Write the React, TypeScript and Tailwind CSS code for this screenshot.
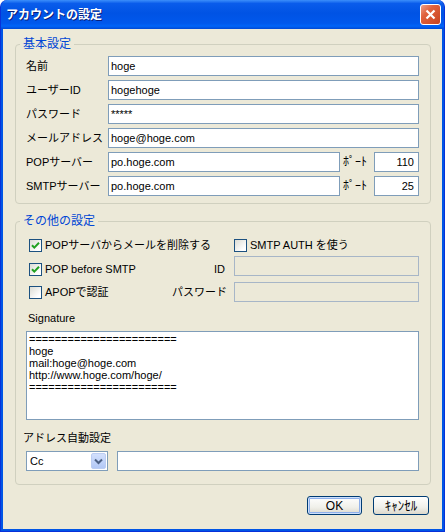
import { ReactNode } from 'react';

const FONT = "font-['Liberation_Sans','Noto_Sans_CJK_JP',sans-serif]";

interface FieldProps {
  value?: string;
  className?: string;
  align?: 'left' | 'right';
  disabled?: boolean;
}

const Field = ({ value = '', className = '', align = 'left', disabled = false }: FieldProps) => (
  <div
    className={`h-[20px] border px-[2px] text-[11px] leading-[18px] whitespace-nowrap overflow-hidden ${
      disabled ? 'bg-[#ECE9D8] border-[#A7B6C7]' : 'bg-white border-[#7F9DB9]'
    } ${align === 'right' ? 'text-right pr-[4px]' : ''} ${className}`}
  >
    {value}
  </div>
);

interface CheckProps {
  checked?: boolean;
  label: string;
}

const Check = ({ checked = false, label }: CheckProps) => (
  <div className="flex items-center gap-[3px]">
    <span className="w-[13px] h-[13px] shrink-0 border border-[#1C5180] bg-[linear-gradient(135deg,#DCDCD4,#FFFFFF_80%)] flex items-center justify-center">
      {checked && (
        <svg width="11" height="11" viewBox="0 0 11 11">
          <path d="M2 5.2 L4.3 7.6 L9 2.8" fill="none" stroke="#21A121" strokeWidth="2" />
        </svg>
      )}
    </span>
    <span className="text-[11px] leading-[14px] whitespace-nowrap">{label}</span>
  </div>
);

interface GroupProps {
  title: string;
  className?: string;
  children: ReactNode;
}

const Group = ({ title, className = '', children }: GroupProps) => (
  <fieldset className={`min-w-0 border border-[#D0D0BF] rounded-[4px] pl-[10px] pr-[11px] ${className}`}>
    <legend className="-ml-[6px] px-[3px] text-[12px] leading-[14px] text-[#0046D5]">{title}</legend>
    {children}
  </fieldset>
);

interface ButtonProps {
  label: string;
  isDefault?: boolean;
  className?: string;
}

const Button = ({ label, isDefault = false, className = '' }: ButtonProps) => (
  <div
    className={`h-[19px] rounded-[3px] border border-[#003C74] bg-[linear-gradient(to_bottom,#FFFFFF,#F0F0EA_60%,#DCD8CC)] flex items-center justify-center leading-[14px] ${
      isDefault ? 'shadow-[inset_0_0_0_1px_#CEE0FB,inset_0_0_0_2px_#8FB0EB]' : ''
    } ${className}`}
  >
    {label}
  </div>
);

const rows = [
  { label: '名前', value: 'hoge' },
  { label: 'ユーザーID', value: 'hogehoge' },
  { label: 'パスワード', value: '*****' },
  { label: 'メールアドレス', value: 'hoge@hoge.com' },
];

const servers = [
  { label: 'POPサーバー', value: 'po.hoge.com', port: '110' },
  { label: 'SMTPサーバー', value: 'po.hoge.com', port: '25' },
];

const signature = [
  '=======================',
  'hoge',
  'mail:hoge@hoge.com',
  'http://www.hoge.com/hoge/',
  '=======================',
];

const App = () => {
  return (
    <div className={`w-[445px] h-[532px] bg-white text-black ${FONT}`}>
      <div className="h-full flex flex-col rounded-t-[7px] bg-[#0055E5] border-l border-r border-b border-[#0831D9]">
        {/* タイトルバー */}
        <div className="h-[29px] shrink-0 flex items-center justify-between pl-[5px] pr-[3px] rounded-t-[7px] bg-[linear-gradient(to_bottom,#3C8FFB_0%,#0A5CEB_12%,#0053E4_45%,#0058EC_80%,#0064F8_90%,#0049D4_100%)]">
          <span className="text-[12px] leading-[16px] font-bold text-white [text-shadow:1px_1px_0_#0A1E7A]">
            アカウントの設定
          </span>
          <div className="w-[21px] h-[21px] rounded-[3px] border border-white bg-[linear-gradient(135deg,#EDA08A_0%,#E0623D_35%,#C8431F_100%)] flex items-center justify-center">
            <svg width="13" height="13" viewBox="0 0 13 13">
              <path d="M2.5 2.5 L10.5 10.5 M10.5 2.5 L2.5 10.5" stroke="white" strokeWidth="2.2" />
            </svg>
          </div>
        </div>

        {/* 本体 */}
        <div className="flex-1 ml-[2px] mr-[2px] mb-[2px] bg-[#ECE9D8] flex flex-col pl-[12px] pr-[11px]">
          <Group title="基本設定" className="mt-[8px] pt-[5px] pb-[7px]">
            <div className="flex flex-col gap-[4px]">
              {rows.map(row => (
                <div key={row.label} className="flex items-center h-[20px]">
                  <span className="w-[82px] text-[11px] leading-[14px] whitespace-nowrap">{row.label}</span>
                  <Field value={row.value} className="flex-1" />
                </div>
              ))}
              {servers.map(row => (
                <div key={row.label} className="flex items-center h-[20px]">
                  <span className="w-[82px] text-[11px] leading-[14px] whitespace-nowrap">{row.label}</span>
                  <Field value={row.value} className="w-[232px]" />
                  <span className="w-[34px] pl-[3px] text-[12px] leading-[14px]">ﾎﾟｰﾄ</span>
                  <Field value={row.port} align="right" className="flex-1" />
                </div>
              ))}
            </div>
          </Group>

          <Group title="その他の設定" className="mt-[10px] pt-[6px] pb-[13px]">
            <div className="flex items-center h-[22px] pl-[3px]">
              <div className="w-[205px]">
                <Check checked label="POPサーバからメールを削除する" />
              </div>
              <Check label="SMTP AUTH を使う" />
            </div>
            <div className="flex items-start h-[20px] pl-[3px]">
              <div className="w-[205px] h-[20px] mt-[3px] flex items-center">
                <Check checked label="POP before SMTP" />
                <span className="ml-auto pr-[9px] text-[11px] leading-[14px]">ID</span>
              </div>
              <Field disabled className="flex-1" />
            </div>
            <div className="flex items-center h-[20px] mt-[6px] pl-[3px]">
              <div className="w-[205px] flex items-center">
                <Check label="APOPで認証" />
                <span className="ml-auto pr-[7px] text-[11px] leading-[14px]">パスワード</span>
              </div>
              <Field disabled className="flex-1" />
            </div>

            <div className="mt-[9px] pl-[2px] text-[11px] leading-[14px]">Signature</div>
            <div className="mt-[6px] h-[89px] border border-[#7F9DB9] bg-white pl-[2px] pt-[1px] text-[11px] leading-[12px] whitespace-pre overflow-hidden">
              {signature.map((line, i) => (
                <div key={i}>{line}</div>
              ))}
            </div>

            <div className="mt-[11px] -ml-[3px] text-[11px] leading-[14px]">アドレス自動設定</div>
            <div className="mt-[6px] flex items-center h-[20px] gap-[9px]">
              <div className="w-[82px] h-[20px] border border-[#7F9DB9] bg-white flex items-center justify-between pl-[3px] pr-[1px]">
                <span className="text-[11px] leading-[14px]">Cc</span>
                <span className="w-[15px] h-[16px] rounded-[2px] bg-[linear-gradient(to_bottom,#D3E0FD,#B2C8F6)] border border-[#BCCDF2] flex items-center justify-center">
                  <svg width="9" height="7" viewBox="0 0 9 7">
                    <path d="M1 1.5 L4.5 5 L8 1.5" fill="none" stroke="#4D6185" strokeWidth="2" />
                  </svg>
                </span>
              </div>
              <Field className="flex-1" />
            </div>
          </Group>

          {/* ボタン */}
          <div className="mt-[11px] flex justify-end gap-[11px] pr-[2px]">
            <Button label="OK" isDefault className="w-[55px] text-[12px]" />
            <Button label="ｷｬﾝｾﾙ" className="w-[56px] text-[13px]" />
          </div>
        </div>
      </div>
    </div>
  );
};

export default App;
